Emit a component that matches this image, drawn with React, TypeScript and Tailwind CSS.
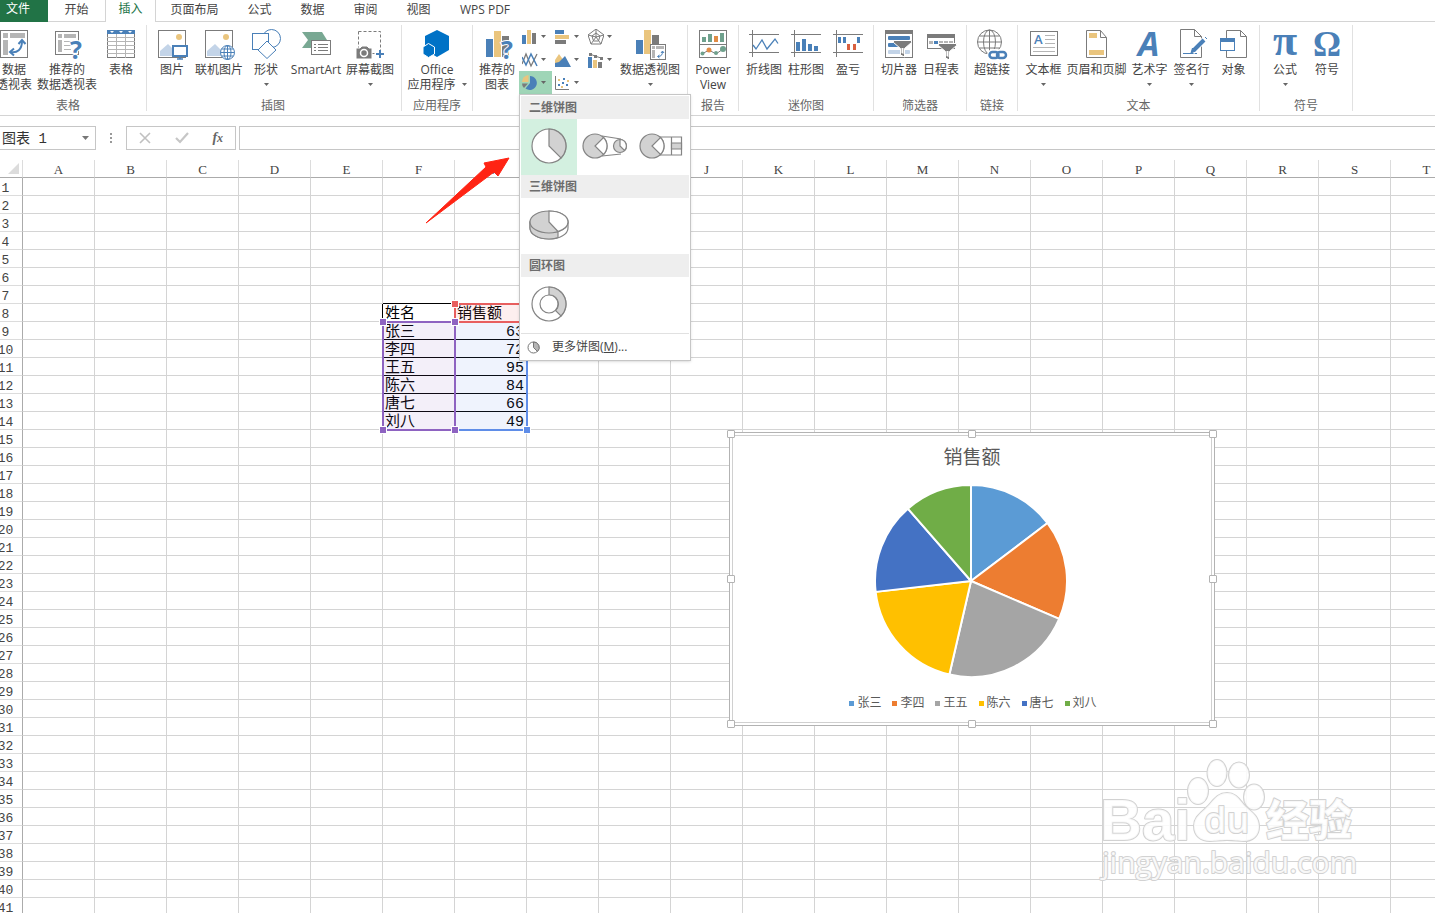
import type { ReactNode } from 'react'
import clsx from 'clsx'

const BLUE = '#4a80b8'
const GOLD = '#eac57e'
const GRAY = '#7b7b7b'
const LIGHT = '#b5b5b5'

const people = [
  { name: '张三', value: 63, color: '#5b9bd5', dot: 'bg-[#5b9bd5]' },
  { name: '李四', value: 72, color: '#ed7d31', dot: 'bg-[#ed7d31]' },
  { name: '王五', value: 95, color: '#a5a5a5', dot: 'bg-[#a5a5a5]' },
  { name: '陈六', value: 84, color: '#ffc000', dot: 'bg-[#ffc000]' },
  { name: '唐七', value: 66, color: '#4472c4', dot: 'bg-[#4472c4]' },
  { name: '刘八', value: 49, color: '#70ad47', dot: 'bg-[#70ad47]' },
]

const columns = 'ABCDEFGHIJKLMNOPQRSTUVWXYZ'.split('')
const rows = Array.from({ length: 60 }, (_, i) => i + 1)

/* ---------- icons ---------- */

function Icon({ children }: { children: ReactNode }) {
  return <svg width="32" height="32" viewBox="0 0 32 32" fill="none" className="block shrink-0 overflow-visible" aria-hidden="true">{children}</svg>
}

function Mini({ children }: { children: ReactNode }) {
  return <svg width="16" height="16" viewBox="0 0 16 16" fill="none" className="block shrink-0" aria-hidden="true">{children}</svg>
}

function Caret({ className }: { className?: string }) {
  return <svg width="5" height="3" viewBox="0 0 5 3" className={clsx('shrink-0', className)} aria-hidden="true"><path d="M0 0h5L2.5 3z" fill="#666" /></svg>
}

function Question({ x, y }: { x: number; y: number }) {
  return <text x={x} y={y} fontFamily="Open Sans" fontWeight="700" fontSize="25" fill={BLUE} stroke="#fff" strokeWidth="2" paintOrder="stroke">?</text>
}

const PivotIcon = () => <Icon>
  <rect x="2.5" y="2.5" width="27" height="27" stroke={GRAY} />
  <path d="M5 5h5v5H5zM12 5h15v5H12zM5 12h5v15H5z" fill={LIGHT} />
  <path d="M13 24c6 1 11-2 11-11" stroke={BLUE} strokeWidth="2" />
  <path d="M20.500 16l3.500-4 3.500 4M16 20.500l-4 3.500 4 3.500" stroke={BLUE} strokeWidth="2" />
</Icon>

const RecommendPivotIcon = () => <Icon>
  <rect x="4.500" y="3.500" width="23" height="23" stroke={GRAY} />
  <path d="M7 6h4v4H7zM13 6h12v4H13zM7 12h4v12H7z" fill={LIGHT} />
  <path d="M13 13.500h7M13 17.500h7M13 21.500h7" stroke={LIGHT} />
  <Question x={19} y={31} />
</Icon>

const TableIcon = () => <Icon>
  <rect x="2.500" y="2.500" width="27" height="27" stroke={GRAY} />
  <path d="M2 9.500h28M2 13.500h28M2 17.500h28M2 21.500h28M2 25.500h28M11.500 6v24M20.500 6v24" stroke={LIGHT} />
  <path d="M2 2h28v4H2z" fill={BLUE} />
  <path d="M5 3h4l-2 2zM14 3h4l-2 2zM23 3h4l-2 2z" fill="#fff" />
</Icon>

const PictureIcon = () => <Icon>
  <rect x="2.500" y="2.500" width="27" height="27" stroke={GRAY} />
  <circle cx="23" cy="9" r="3" fill={GOLD} />
  <path d="M4 28v-5l8-7 6 6v6z" fill="#c3d4e8" />
  <rect x="17" y="18" width="14" height="10" fill="#fff" stroke={BLUE} strokeWidth="2" />
  <path d="M24 28v3M21 31h6" stroke={BLUE} strokeWidth="1.500" />
</Icon>

const OnlinePictureIcon = () => <Icon>
  <rect x="2.500" y="2.500" width="27" height="27" stroke={GRAY} />
  <circle cx="23" cy="9" r="3" fill={GOLD} />
  <path d="M4 28v-5l8-7 6 6v6z" fill="#c3d4e8" />
  <circle cx="24.500" cy="24.500" r="7" fill="#fff" stroke={BLUE} />
  <path d="M24.500 17.500v14M17.500 24.500h14M18.500 21h12M18.500 28h12" stroke={BLUE} />
  <ellipse cx="24.500" cy="24.500" rx="3.500" ry="7" stroke={BLUE} />
</Icon>

const ShapesIcon = () => <Icon>
  <circle cx="21.500" cy="10.500" r="9" stroke={BLUE} fill="#fff" />
  <rect x="2.500" y="5.500" width="16" height="16" stroke={BLUE} fill="#fff" />
  <path d="M17 13l9 9-9 8.500-9-8.500z" stroke={BLUE} fill="#fff" />
</Icon>

const SmartArtIcon = () => <Icon>
  <path d="M2 4h20l5 8-4 8H2l6-8z" fill="#79a893" />
  <rect x="11.500" y="12.500" width="19" height="14" fill="#fff" stroke={GRAY} />
  <path d="M14 16.500h2M18 16.500h10M14 19.500h2M18 19.500h10M14 22.500h2M18 22.500h10" stroke={GRAY} />
</Icon>

const ScreenshotIcon = () => <Icon>
  <rect x="4.500" y="3.500" width="22" height="22" stroke={GRAY} strokeDasharray="3 2" />
  <path d="M2 20h4l2-2h5l2 2h3v11H2z" fill={GRAY} stroke="#fff" strokeWidth="1" />
  <circle cx="10" cy="25" r="3.500" stroke="#fff" strokeWidth="1.500" />
  <path d="M26 22v8M22 26h8" stroke="#fff" strokeWidth="5" />
  <path d="M26 22v8M22 26h8" stroke={BLUE} strokeWidth="2" />
</Icon>

const OfficeIcon = () => <Icon>
  <path d="M16 2l12 6v14l-12 7-12-7V8z" fill="#0072c6" />
  <path d="M7.500 15.500l6 3.500v7l-6 3.500L2 26v-7z" fill="#0072c6" stroke="#fff" />
</Icon>

const RecommendChartIcon = () => <Icon>
  <path d="M5 11h7v18H5z" fill={BLUE} />
  <path d="M13 3h7v26h-7z" fill={GOLD} />
  <path d="M21 8h7v21h-7z" fill={GRAY} />
  <Question x={20} y={31} />
</Icon>

const PivotChartIcon = () => <Icon>
  <path d="M2 12h7v14H2z" fill={BLUE} />
  <path d="M10 2h7v24h-7z" fill={GOLD} />
  <path d="M18 7h7v19h-7z" fill={GRAY} />
  <rect x="16.500" y="16.500" width="15" height="15" fill="#fff" stroke={GRAY} />
  <path d="M18 18h3v3h-3zM22 18h8v3h-8zM18 22h3v8h-3z" fill={LIGHT} />
  <path d="M24 28.500c3 0 4.500-1.500 4.500-5M27 25l1.500-2 1.500 2M25.500 27l-2 1.500 2 1.500" stroke={BLUE} />
</Icon>

const PowerViewIcon = () => <Icon>
  <rect x="2.500" y="2.500" width="27" height="27" stroke={GRAY} />
  <path d="M2 16.500h28" stroke={GRAY} />
  <path d="M5 9h4v5H5zM11 6h4v8h-4zM23 5h4v9h-4z" fill="#6fa18d" />
  <path d="M17 8h4v6h-4z" fill="#e18b45" />
  <path d="M5 26l7-4 7 4 7-5" stroke={GRAY} />
  <circle cx="5.500" cy="25.500" r="2" fill="#6fa18d" /><circle cx="12" cy="22" r="2.500" fill="#e18b45" />
  <circle cx="19" cy="25" r="2" fill="#6fa18d" /><circle cx="26" cy="21" r="3" fill="#6fa18d" />
</Icon>

const SparkAxes = () => <path d="M4.500 2v27M1 6.500h30M1 24.500h30" stroke={GRAY} />

const SparkLineIcon = () => <Icon>
  <SparkAxes />
  <path d="M5 17l3 4 6-9 5 9 8-10 3 4.500" stroke={BLUE} strokeWidth="1.300" />
</Icon>

const SparkColumnIcon = () => <Icon>
  <SparkAxes />
  <path d="M6 14h4v9H6zM12 11h4v12h-4zM18 16h4v7h-4zM24 18h4v5h-4z" fill={BLUE} />
</Icon>

const WinLossIcon = () => <Icon>
  <SparkAxes />
  <path d="M6 9h3v6H6zM11 9h3v6h-3zM25 9h3v6h-3z" fill={BLUE} />
  <path d="M15 16h3v6h-3zM21 16h3v6h-3z" fill="#d8603f" />
</Icon>

const SlicerIcon = () => <Icon>
  <rect x="2.500" y="2.500" width="27" height="27" stroke={GRAY} />
  <path d="M2 2h28v4H2z" fill={GRAY} />
  <rect x="5" y="8" width="22" height="4" rx="1" fill={BLUE} />
  <rect x="5" y="15" width="14" height="4" rx="1" fill={BLUE} />
  <rect x="5" y="22" width="22" height="4" rx="1" fill="#c3d4e8" />
  <path d="M10.500 12.500h18v2l-7 6V29l-4-2v-6.500l-7-6z" fill={GRAY} stroke="#fff" />
  <path d="M18.500 20h2v6l-2-1z" fill="#fff" />
</Icon>

const TimelineIcon = () => <Icon>
  <rect x="2.500" y="6.500" width="27" height="14" stroke={GRAY} />
  <path d="M2 6h28v4H2z" fill={GRAY} />
  <path d="M4 13h4v3H4zM14 13h4v3h-4zM19 13h4v3h-4zM24 13h4v3h-4z" fill={LIGHT} />
  <path d="M9 13h4v3H9z" fill={BLUE} />
  <path d="M13.500 15.500h18v2l-7 6V32l-4-2v-6.500l-7-6z" fill={GRAY} stroke="#fff" />
  <path d="M21.500 23h2v6l-2-1z" fill="#fff" />
</Icon>

const LinkIcon = () => <Icon>
  <circle cx="13.500" cy="14" r="12" stroke={GRAY} />
  <ellipse cx="13.500" cy="14" rx="6" ry="12" stroke={GRAY} />
  <path d="M1.500 14h24M3.500 8h20M3.500 20h20M13.500 2v24" stroke={GRAY} />
  <g stroke="#fff" strokeWidth="6"><rect x="14" y="24" width="9" height="6" rx="3" /><rect x="21" y="24" width="9" height="6" rx="3" /></g>
  <g stroke={BLUE} strokeWidth="2.500"><rect x="13.500" y="24" width="9" height="6" rx="3" /><rect x="21" y="24" width="9" height="6" rx="3" /></g>
</Icon>

const TextBoxIcon = () => <Icon>
  <rect x="2.500" y="3.500" width="27" height="24" stroke={GRAY} />
  <path d="M17 7.500h10M17 11.500h10M17 15.500h10M5 19.500h22M5 23.500h22" stroke={LIGHT} />
  <text x="6" y="16" fontFamily="Open Sans" fontWeight="600" fontSize="13" fill={BLUE}>A</text>
</Icon>

const HeaderFooterIcon = () => <Icon>
  <path d="M5.500 2.500h14l6 7v20h-20z" stroke={GRAY} />
  <path d="M19.500 2.500v7h6" stroke={GRAY} />
  <path d="M8 5h8v5H8zM8 22h15v5H8z" fill={GOLD} />
</Icon>

const WordArtIcon = () => <Icon>
  <text x="4" y="28" fontFamily="Open Sans" fontWeight="700" fontStyle="italic" fontSize="34" fill={BLUE}>A</text>
</Icon>

const SignatureIcon = () => <Icon>
  <path d="M4.500 1.500h14l7 7v21h-21z" stroke={GRAY} />
  <path d="M18.500 1.500v7h7" stroke={GRAY} />
  <path d="M7 25.500h14" stroke={BLUE} />
  <path d="M16 24L29 11" stroke="#fff" strokeWidth="6" />
  <path d="M18 22L28 12" stroke={BLUE} strokeWidth="4" />
  <path d="M15 25l1.500-5 3 3zM29 9l2 2" fill={BLUE} stroke={BLUE} />
</Icon>

const ObjectIcon = () => <Icon>
  <path d="M8.500 2.500h14l6 6v21h-20z" stroke={GRAY} />
  <path d="M22.500 2.500v6h6" stroke={GRAY} />
  <rect x="2.500" y="10.500" width="14" height="12" fill="#fff" stroke={BLUE} />
  <path d="M2 10h15v4H2z" fill={BLUE} />
</Icon>

const PiIcon = () => <Icon>
  <text x="16" y="27" textAnchor="middle" fontFamily="Liberation Serif" fontWeight="700" fontSize="44" fill={BLUE}>π</text>
</Icon>

const OmegaIcon = () => <Icon>
  <text x="16" y="28" textAnchor="middle" fontFamily="Liberation Serif" fontWeight="700" fontSize="35" fill={BLUE}>Ω</text>
</Icon>

/* ---------- ribbon ---------- */

type ToolProps = { icon: ReactNode; lines: string[]; width: string; caret?: 'below' | 'inline' }

function Tool({ icon, lines, width, caret }: ToolProps) {
  return <button type="button" className={clsx('flex shrink-0 flex-col items-center pt-[3px] leading-[15px] text-[#444]', width)}>
    {icon}
    <span className="mt-0.5 flex flex-col items-center whitespace-nowrap">
      {lines.map((line, i) => <span key={line} className="flex items-center gap-1.5">
        {line}{caret === 'inline' && i === lines.length - 1 && <Caret />}
      </span>)}
    </span>
    {caret === 'below' && <Caret className="mt-1.5" />}
  </button>
}

function Group({ title, className, children }: { title?: string; className: string; children: ReactNode }) {
  return <section className={clsx('flex h-[86px] shrink-0 flex-col justify-between border-r border-[#e1e1e1]', className)}>
    <div className="flex justify-center">{children}</div>
    {title && <h2 className="text-center leading-[10px] text-[#666]">{title}</h2>}
  </section>
}

const chartKinds = [
  { label: '柱形图', icon: <Mini><path d="M0 6h4v9H0z" fill={BLUE} /><path d="M5 1h4v14H5z" fill={GOLD} /><path d="M10 4h4v11h-4z" fill={GRAY} /></Mini> },
  { label: '条形图', icon: <Mini><path d="M0 1h9v4H0z" fill={BLUE} /><path d="M0 6h14v4H0z" fill={GOLD} /><path d="M0 11h11v4H0z" fill={GRAY} /></Mini> },
  { label: '雷达图', icon: <Mini><path d="M8 0l8 6-3 9H3L0 6zM8 4l4 3-1.500 5h-5L4 7zM8 0v8M16 6L8 8M13 15L8 8M3 15l5-7M0 6l8 2" stroke={GRAY} /></Mini> },
  { label: '折线图', icon: <Mini><path d="M0 12L4 2l5 12 6-12" stroke={GRAY} strokeWidth="1.300" /><path d="M0 5l4 8 5-11 6 12" stroke={BLUE} strokeWidth="1.500" /></Mini> },
  { label: '面积图', icon: <Mini><path d="M0 8l4-6 5 7v6H0z" fill={GOLD} /><path d="M0 15v-4l4-1 6-6 6 11z" fill={BLUE} /></Mini> },
  { label: '组合图', icon: <Mini><path d="M0 5h4v11H0z" fill={BLUE} /><path d="M5 8h4v8H5z" fill={GOLD} /><path d="M10 10h4v6h-4z" fill={GRAY} /><path d="M2 2l5 2 6 2" stroke={GRAY} /><path d="M1 1h3v3H1zM6 3h3v3H6zM12 5h3v3h-3z" fill={GRAY} /></Mini> },
  { label: '饼图', icon: <Mini><path d="M8 1a7 7 0 1 1-4.500 12.500L8 8z" fill={BLUE} /><path d="M6.500 0v7H0a7 7 0 0 1 6.500-7z" fill={GOLD} /><path d="M0 8.500h6L2 13a6 6 0 0 1-2-4.500z" fill={GRAY} /></Mini> },
  { label: '散点图', icon: <Mini><path d="M.5 1v13.500H14" stroke={GRAY} /><path d="M3 9h2v2H3zM7 7h2v2H7zM11 9h2v2h-2zM8 3h2v2H8z" fill={BLUE} /><path d="M3 4h2v2H3zM6 11h2v2H6zM12 5h2v2h-2z" fill={GOLD} /></Mini> },
]

function MenuTitle({ children }: { children: ReactNode }) {
  return <h3 className="bg-[#eee] px-2 font-bold leading-[23px] text-[#6d6d6d]">{children}</h3>
}

function PieMenu() {
  const stroke = { stroke: '#848484', strokeWidth: 1.2, fill: 'none' }
  const fill = '#d2d2d2'
  const item = 'flex size-14 items-center justify-center pb-0.5 pr-px'
  return <div className="absolute left-0 top-full z-30 w-[172px] border border-[#c6c6c6] bg-white px-px pt-px text-left shadow-sm">
    <MenuTitle>二维饼图</MenuTitle>
    <div className="flex">
      <button type="button" aria-label="饼图" className={clsx(item, 'bg-[#d3f0e0]')}>
        <svg width="36" height="36" viewBox="0 0 36 36" {...stroke}>
          <circle cx="18" cy="18" r="17" fill="#fff" />
          <path d="M18 1a17 17 0 0 1 12 29L18 18z" fill={fill} />
        </svg>
      </button>
      <button type="button" aria-label="子母饼图" className={item}>
        <svg width="46" height="28" viewBox="0 0 46 28" {...stroke}>
          <path d="M20 4l19 3M20 24l19-2" />
          <circle cx="13" cy="14" r="12" fill={fill} />
          <path d="M21.500 5.500a12 12 0 0 1 0 17L13 14z" fill="#fff" />
          <circle cx="38" cy="14" r="6.500" fill={fill} />
          <path d="M38 7.500a6.500 6.500 0 0 1 4.500 11L38 14z" fill="#fff" />
        </svg>
      </button>
      <button type="button" aria-label="复合条饼图" className={item}>
        <svg width="44" height="28" viewBox="0 0 44 28" {...stroke}>
          <path d="M20 5h22.500v18H20M32.500 5v18" />
          <path d="M32.500 11h10v6h-10z" fill={fill} />
          <circle cx="13" cy="14" r="12" fill={fill} />
          <path d="M21.500 5.500a12 12 0 0 1 0 17L13 14z" fill="#fff" />
        </svg>
      </button>
    </div>
    <MenuTitle>三维饼图</MenuTitle>
    <button type="button" aria-label="三维饼图" className={item}>
      <svg width="40" height="30" viewBox="0 0 40 30" {...stroke}>
        <path d="M1 12v6c0 6 8 11 19 11s19-5 19-11v-6z" fill="#fff" />
        <path d="M1 12v6c0 6 8 11 19 11 3.500 0 7-.5 9-1.500V22z" fill={fill} />
        <ellipse cx="20" cy="12" rx="19" ry="11" fill={fill} />
        <path d="M20 1c11 0 19 5 19 11 0 4-4 7.500-10 9.500L20 12z" fill="#fff" />
      </svg>
    </button>
    <MenuTitle>圆环图</MenuTitle>
    <button type="button" aria-label="圆环图" className={item}>
      <svg width="36" height="36" viewBox="0 0 36 36" {...stroke}>
        <circle cx="18" cy="18" r="17" />
        <path d="M18 1a17 17 0 0 1 12 29l-5.500-5.500A9 9 0 0 0 18 9z" fill={fill} />
        <circle cx="18" cy="18" r="9" fill="#fff" />
      </svg>
    </button>
    <button type="button" className="flex w-full items-center gap-3 border-t border-[#e1e1e1] py-1 pl-1.5 leading-[18px] text-[#444]">
      <svg width="13" height="13" viewBox="0 0 13 13" fill="none" stroke="#777">
        <circle cx="6.500" cy="6.500" r="5.500" fill="#fff" />
        <path d="M6.500 1a5.500 5.500 0 0 1 4 9.500l-4-4z" fill="#b5b5b5" />
      </svg>
      <span>更多饼图(<u>M</u>)...</span>
    </button>
  </div>
}

function Ribbon() {
  return <div className="relative z-20 flex h-[94px] shrink-0 border-b border-[#d4d4d4] pt-[3px]">
    <Group title="表格" className="-ml-2.5 w-[157px]">
      <Tool icon={<PivotIcon />} lines={['数据', '透视表']} width="w-[44px]" />
      <Tool icon={<RecommendPivotIcon />} lines={['推荐的', '数据透视表']} width="w-[62px]" />
      <Tool icon={<TableIcon />} lines={['表格']} width="w-[46px]" />
    </Group>
    <Group title="插图" className="w-[255px] pr-0.5">
      <Tool icon={<PictureIcon />} lines={['图片']} width="w-[46px]" />
      <Tool icon={<OnlinePictureIcon />} lines={['联机图片']} width="w-[48px]" />
      <Tool icon={<ShapesIcon />} lines={['形状']} width="w-[46px]" caret="below" />
      <Tool icon={<SmartArtIcon />} lines={['SmartArt']} width="w-[54px]" />
      <Tool icon={<ScreenshotIcon />} lines={['屏幕截图']} width="w-[54px]" caret="below" />
    </Group>
    <Group title="应用程序" className="w-[71px]">
      <Tool icon={<OfficeIcon />} lines={['Office', '应用程序']} width="w-[66px]" caret="inline" />
    </Group>
    <Group className="w-[215px] pr-[3px]">
      <Tool icon={<RecommendChartIcon />} lines={['推荐的', '图表']} width="w-[44px]" />
      <div className="grid w-[99px] shrink-0 auto-rows-[23px] grid-cols-3">
        {chartKinds.map(kind => <div key={kind.label} className="relative">
          <button type="button" aria-label={kind.label} className={clsx('flex size-full items-center gap-[3px] pl-[3px]', kind.label === '饼图' && 'bg-[#9fd5b7]')}>
            {kind.icon}<Caret />
          </button>
          {kind.label === '饼图' && <PieMenu />}
        </div>)}
      </div>
      <Tool icon={<PivotChartIcon />} lines={['数据透视图']} width="w-[64px]" caret="below" />
    </Group>
    <Group title="报告" className="w-[51px]">
      <Tool icon={<PowerViewIcon />} lines={['Power', 'View']} width="w-[42px]" />
    </Group>
    <Group title="迷你图" className="w-[135px]">
      <Tool icon={<SparkLineIcon />} lines={['折线图']} width="w-[42px]" />
      <Tool icon={<SparkColumnIcon />} lines={['柱形图']} width="w-[42px]" />
      <Tool icon={<WinLossIcon />} lines={['盈亏']} width="w-[42px]" />
    </Group>
    <Group title="筛选器" className="w-[93px]">
      <Tool icon={<SlicerIcon />} lines={['切片器']} width="w-[42px]" />
      <Tool icon={<TimelineIcon />} lines={['日程表']} width="w-[42px]" />
    </Group>
    <Group title="链接" className="w-[51px]">
      <Tool icon={<LinkIcon />} lines={['超链接']} width="w-[42px]" />
    </Group>
    <Group title="文本" className="w-[242px]">
      <Tool icon={<TextBoxIcon />} lines={['文本框']} width="w-[42px]" caret="below" />
      <Tool icon={<HeaderFooterIcon />} lines={['页眉和页脚']} width="w-[64px]" />
      <Tool icon={<WordArtIcon />} lines={['艺术字']} width="w-[42px]" caret="below" />
      <Tool icon={<SignatureIcon />} lines={['签名行']} width="w-[42px]" caret="below" />
      <Tool icon={<ObjectIcon />} lines={['对象']} width="w-[42px]" />
    </Group>
    <Group title="符号" className="w-[93px]">
      <Tool icon={<PiIcon />} lines={['公式']} width="w-[42px]" caret="below" />
      <Tool icon={<OmegaIcon />} lines={['符号']} width="w-[42px]" />
    </Group>
  </div>
}

function Tabs() {
  const tab = 'h-[22px] border-b border-[#d4d4d4] pb-0.5 text-center leading-[18px] text-[#444]'
  return <nav className="flex h-[22px] shrink-0">
    <button type="button" className="h-[22px] w-12 bg-[#217346] pb-1 pr-3 leading-[18px] text-white">文件</button>
    <button type="button" className={clsx(tab, 'w-[57px]')}>开始</button>
    <button type="button" className="h-[22px] w-[51px] border-x border-[#d4d4d4] pb-1 leading-[18px] text-[#217346]">插入</button>
    <button type="button" className={clsx(tab, 'w-[77px]')}>页面布局</button>
    {['公式', '数据', '审阅', '视图'].map(name => <button key={name} type="button" className={clsx(tab, 'w-[53px]')}>{name}</button>)}
    <button type="button" className={clsx(tab, 'w-20')}>WPS PDF</button>
    <span className="flex-1 border-b border-[#d4d4d4]" />
  </nav>
}

function FormulaBar() {
  return <div className="flex h-11 shrink-0 items-start pt-2.5">
    <div className="flex h-6 w-24 items-center justify-between border border-l-0 border-[#c6c6c6] pr-1.5">
      <input aria-label="名称框" defaultValue="图表 1" className="w-[76px] pl-0.5 pt-0.5 font-['Liberation_Mono','Noto_Sans_CJK_SC',monospace] text-sm leading-5 text-[#333] outline-none" />
      <button type="button" aria-label="展开名称"><svg width="7" height="4" viewBox="0 0 7 4"><path d="M0 0h7L3.500 4z" fill="#777" /></svg></button>
    </div>
    <svg width="30" height="24" viewBox="0 0 30 24" fill="#999" aria-hidden="true"><path d="M14 7h2v2h-2zM14 11h2v2h-2zM14 15h2v2h-2z" /></svg>
    <div className="flex h-6 w-[110px] items-center justify-around border border-[#c6c6c6]">
      <button type="button" aria-label="取消"><svg width="12" height="12" viewBox="0 0 12 12" stroke="#c0c0c0" strokeWidth="1.600"><path d="M1 1l10 10M11 1L1 11" /></svg></button>
      <button type="button" aria-label="输入"><svg width="14" height="12" viewBox="0 0 14 12" fill="none" stroke="#c6c6c6" strokeWidth="2.200"><path d="M1 6l4 4L13 1" /></svg></button>
      <button type="button" className="font-['Liberation_Serif',serif] text-sm font-bold italic leading-5 text-[#666]">f<span className="text-xs">x</span></button>
    </div>
    <input aria-label="编辑栏" className="ml-[3px] h-6 min-w-0 flex-1 border border-r-0 border-[#c6c6c6] px-1 outline-none" />
  </div>
}

/* ---------- sheet ---------- */

function cellValue(col: string, row: number) {
  if (row === 8) return col === 'F' ? '姓名' : col === 'G' ? '销售额' : ''
  const person = people[row - 9]
  if (!person) return ''
  return col === 'F' ? person.name : col === 'G' ? person.value : ''
}

function cellBorder(col: string, row: number) {
  const inTable = col === 'F' || col === 'G'
  return clsx(
    (inTable && row >= 7 && row <= 14) ? 'border-b-black' : 'border-b-[#d4d4d4]',
    (col === 'E' && row === 8) ? 'border-r-black' : 'border-r-[#d4d4d4]',
  )
}

function Grid() {
  return <table className="-ml-[11px] w-max table-fixed border-separate border-spacing-0 font-['Liberation_Mono','Noto_Sans_CJK_SC',monospace] text-[#444]">
    <thead>
      <tr>
        <th aria-label="全选" className="h-[18px] w-[34px] min-w-[34px] border-b border-r border-b-[#ababab] border-r-[#dcdcdc] p-0">
          <svg width="11" height="11" viewBox="0 0 11 11" className="ml-auto mr-[3px]"><path d="M11 0v11H0z" fill="#dcdcdc" /></svg>
        </th>
        {columns.map(col => <th key={col} scope="col" className="h-[18px] w-[72px] min-w-[72px] border-b border-r border-b-[#ababab] border-r-[#dcdcdc] p-0 pt-0.5 font-['Liberation_Serif',serif] text-[13px] font-normal leading-[15px]">{col}</th>)}
      </tr>
    </thead>
    <tbody>
      {rows.map(row => <tr key={row}>
        <th scope="row" className="h-[18px] border-b border-r border-b-[#dcdcdc] border-r-[#ababab] p-0 pt-1 text-[13px] font-normal leading-[13px]">{row}</th>
        {columns.map(col => <td key={col} className={clsx('h-[18px] border-b border-r p-0 px-0.5 pt-1 text-[15px] leading-[13px] text-black', cellBorder(col, row), col === 'G' && row > 8 && 'text-right')}>{cellValue(col, row)}</td>)}
      </tr>)}
    </tbody>
  </table>
}

function Handle({ className }: { className: string }) {
  return <i className={clsx('absolute size-2 border border-white', className)} />
}

// Coloured frames over the ranges that feed the chart.
function RangeFrames() {
  return <>
    <div className="absolute left-[454px] top-[143px] h-5 w-[74px] border-2 border-[#e85f5f] bg-[#e85f5f]/10">
      <Handle className="-left-[5px] -top-[5px] bg-[#e85f5f]" />
    </div>
    <div className="absolute left-[454px] top-[163px] h-[108px] w-[74px] border-2 border-t-0 border-[#5f8de8] bg-[#5f8de8]/10">
      <Handle className="-bottom-[5px] -right-[5px] bg-[#5f8de8]" />
    </div>
    <div className="absolute left-[382px] top-[161px] h-[110px] w-[74px] border-2 border-[#8e63c1] bg-[#8e63c1]/10">
      <Handle className="-left-[5px] -top-[5px] bg-[#8e63c1]" />
      <Handle className="-right-[5px] -top-[5px] bg-[#8e63c1]" />
      <Handle className="-bottom-[5px] -left-[5px] bg-[#8e63c1]" />
      <Handle className="-bottom-[5px] -right-[5px] bg-[#8e63c1]" />
    </div>
  </>
}

function Pie() {
  const total = people.reduce((sum, p) => sum + p.value, 0)
  const point = (part: number) => {
    const angle = (part / total) * Math.PI * 2
    return `${96 + Math.sin(angle) * 96} ${97 - Math.cos(angle) * 96}`
  }
  let sum = 0
  return <svg width="194" height="194" viewBox="0 0 194 194" className="mt-4" role="img" aria-label="销售额">
    {people.map(p => {
      const from = point(sum)
      sum += p.value
      return <path key={p.name} d={`M96 97L${from}A96 96 0 0 1 ${point(sum)}z`} fill={p.color} stroke="#fff" strokeWidth="2" strokeLinejoin="round" />
    })}
  </svg>
}

const chartHandles = [
  '-left-[3px] -top-[3px]', 'left-1/2 -translate-x-1/2 -top-[3px]', '-right-[3px] -top-[3px]',
  '-left-[3px] top-1/2 -translate-y-1/2', '-right-[3px] top-1/2 -translate-y-1/2',
  '-left-[3px] -bottom-[3px]', 'left-1/2 -translate-x-1/2 -bottom-[3px]', '-right-[3px] -bottom-[3px]',
]

function Chart() {
  return <figure className="absolute left-[729px] top-[272px] w-[486px] border border-[#b3b3b3] bg-white p-0.5">
    <div className="flex flex-col items-center border border-[#d0d0d0] pb-[11px] pt-2.5 text-[#595959]">
      <h2 className="text-[19px] leading-[22px]">销售额</h2>
      <Pie />
      <ul className="mt-[17px] flex gap-[11px] pl-0.5 leading-4">
        {people.map(p => <li key={p.name} className="flex items-center gap-[3px]"><i className={clsx('size-[5px]', p.dot)} />{p.name}</li>)}
      </ul>
    </div>
    {chartHandles.map(pos => <i key={pos} className={clsx('absolute size-2 rounded-[1px] border border-[#b3b3b3] bg-white', pos)} />)}
  </figure>
}

function Watermark() {
  return <svg width="264" height="128" viewBox="0 0 264 128" className="absolute left-[1096px] top-[596px]" fill="#fff" fillOpacity="0.85" stroke="#d2d2d2" strokeWidth="2" strokeLinejoin="round" paintOrder="stroke">
    <text x="4" y="84" fontFamily="Liberation Sans" fontWeight="700" fontSize="58">Bai</text>
    <ellipse cx="102" cy="35" rx="10" ry="13" />
    <ellipse cx="121" cy="17" rx="9.500" ry="13" />
    <ellipse cx="143" cy="19" rx="10" ry="12.500" />
    <ellipse cx="158" cy="41" rx="10" ry="12.500" />
    <path d="M131 37c10 0 13 8 19 14 7 6 13 10 13 20 0 9-7 14-15 14-6 0-10-1-17-1s-11 1-17 1c-9 0-16-5-16-15 0-9 7-13 13-19s10-14 20-14z" />
    <text x="108" y="77" fontFamily="Open Sans" fontWeight="600" fontSize="36">du</text>
    <text x="170" y="80" fontFamily="Noto Sans CJK SC" fontWeight="900" fontSize="43">经验</text>
    <text x="6" y="117" fontFamily="Open Sans" fontWeight="500" fontSize="30">jingyan.baidu.com</text>
  </svg>
}

export default function App() {
  return <div className="relative flex h-screen flex-col overflow-hidden bg-white font-['Open_Sans','Noto_Sans_CJK_SC',sans-serif] text-xs">
    <Tabs />
    <Ribbon />
    <FormulaBar />
    <main className="relative min-h-0 flex-1 overflow-hidden">
      <Grid />
      <RangeFrames />
      <Chart />
      <Watermark />
    </main>
    <svg width="86" height="68" viewBox="0 0 86 68" className="absolute left-[424px] top-[157px] z-10" aria-hidden="true">
      <path d="M2 66L62 10l-2-4 25-5-11 18-4-4z" fill="#ff2414" stroke="#ff2414" strokeLinejoin="round" />
    </svg>
  </div>
}
